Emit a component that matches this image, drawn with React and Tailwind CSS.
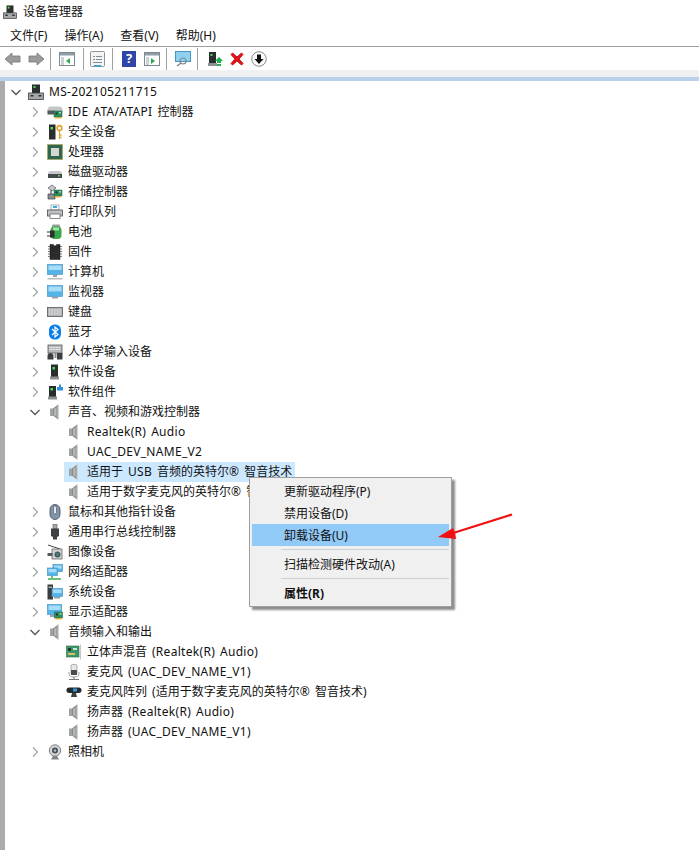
const font = '"Noto Sans", "Noto Sans CJK SC", sans-serif';

// latin runs sit a little wider than the CJK ones in the screenshot
const Label = ({ text }) =>
  text.split(/([\u2E80-\u9FFF\uFF00-\uFFEF]+)/).map((part, i) =>
    i % 2 ? (
      <span key={i}>{part}</span>
    ) : (
      <span key={i} className="tracking-[0.3px] [word-spacing:1.5px]">{part}</span>
    ),
  );

const Card = ({ x = 7, y = 8 }) => (
  <g>
    <rect x={x} y={y} width="8" height="6" fill="#2f8f62" stroke="#1f5e45" strokeWidth="0.5" />
    <rect x={x + 1.5} y={y + 1.5} width="2" height="2" fill="#173c2c" />
    <rect x={x + 5} y={y + 1} width="2" height="1.5" fill="#9fd8b0" />
    <rect x={x + 1} y={y + 6} width="6" height="1.5" fill="#e8b030" />
  </g>
);

const Screen = ({ x = 1, y = 1, w = 14, h = 10 }) => (
  <g>
    <rect x={x} y={y} width={w} height={h} fill="#53b4ea" stroke="#4a94c4" strokeWidth="0.7" />
    <path d={`M${x + 1} ${y + 1}h${w - 2}v${h * 0.45}h${-(w - 2)}z`} fill="#a8dcf7" />
  </g>
);

const icons = {
  root: (
    <g>
      <rect x="4" y="0.500" width="8" height="9" fill="#2b2f2f" />
      <rect x="5.500" y="2" width="2" height="2" fill="#4be04b" />
      <rect x="0.500" y="9" width="15" height="6.500" fill="#a6a9ab" stroke="#3c3f41" strokeWidth="0.8" />
      <rect x="2.500" y="11" width="3" height="1.500" fill="#2b2f2f" />
      <rect x="10.500" y="11" width="3" height="1.500" fill="#2b2f2f" />
    </g>
  ),
  ide: (
    <g>
      <path d="M0.500 6q0-3.500 3.500-3.500h8q3.500 0 3.500 3.500v3H0.500z" fill="#c4c6c8" />
      <rect x="0.500" y="6.500" width="7" height="4" fill="#55595b" />
      <Card x={7} y={7} />
    </g>
  ),
  security: (
    <g>
      <rect x="2" y="0.500" width="6.500" height="15" fill="#2a2d2d" />
      <rect x="3.500" y="3" width="2.500" height="2.500" fill="#4be04b" />
      <circle cx="12.500" cy="4" r="2.400" fill="none" stroke="#e0a830" strokeWidth="1.600" />
      <path d="M12.500 6v9M12.500 11h2M12.500 13.500h2" stroke="#e0a830" strokeWidth="1.300" fill="none" />
    </g>
  ),
  cpu: (
    <g>
      <rect x="0.500" y="0.500" width="15" height="15" fill="#2f6b4e" stroke="#b99a3c" strokeWidth="1" strokeDasharray="1 1" />
      <rect x="1.500" y="1.500" width="13" height="13" fill="#2f6650" />
      <rect x="4" y="4" width="8" height="8" fill="#d6d6d2" />
    </g>
  ),
  disk: (
    <g>
      <path d="M1 10q0-3 3-3h8q3 0 3 3z" fill="#c6c8ca" />
      <rect x="1" y="10" width="14" height="4" fill="#44484a" />
      <rect x="11" y="11" width="2" height="1.500" fill="#4be04b" />
    </g>
  ),
  storage: (
    <g>
      <path d="M1 4l4-3 4 3-4 3z" fill="#c6c8ca" stroke="#55595b" strokeWidth="0.7" />
      <path d="M1 10h7v5H1z" fill="#8c9092" stroke="#3c3f41" strokeWidth="0.7" />
      <path d="M4 6v4" stroke="#3c3f41" strokeWidth="1" />
      <Card x={7} y={6} />
    </g>
  ),
  printer: (
    <g>
      <rect x="4" y="1" width="8" height="5" fill="#fff" stroke="#8a8e90" strokeWidth="0.7" />
      <rect x="6" y="2" width="4" height="2" fill="#3aa8e0" />
      <rect x="0.500" y="6" width="15" height="6" fill="#bfc2c4" stroke="#4a4e50" strokeWidth="0.8" />
      <rect x="3" y="10" width="10" height="4.500" fill="#fff" stroke="#55595b" strokeWidth="0.7" />
    </g>
  ),
  battery: (
    <g>
      <rect x="5" y="0.500" width="8" height="3" rx="1" fill="#9a9ea0" />
      <rect x="3.500" y="2.500" width="11" height="12.500" rx="4" fill="#35a84a" />
      <rect x="6" y="3.500" width="6" height="3" fill="#a5e2a8" />
      <path d="M0 8h4M0 12h4" stroke="#333" strokeWidth="1.200" />
      <path d="M3 6.500h4.500v7H3z" fill="#2c2f2f" />
    </g>
  ),
  firmware: (
    <g>
      <path d="M3 0.500h3.500a1.500 1.500 0 0 0 3 0H13v15H3z" fill="#2b2d2d" stroke="#111" strokeWidth="0.5" />
      <path d="M1 2.500h2M1 5h2M1 7.500h2M1 10h2M1 12.500h2M13 2.500h2M13 5h2M13 7.500h2M13 10h2M13 12.500h2" stroke="#777" strokeWidth="1" />
    </g>
  ),
  computer: (
    <g>
      <Screen x={0.500} y={0.500} w={15} h={10} />
      <rect x="6" y="11" width="4" height="2" fill="#9aa0a4" />
      <rect x="0.500" y="14" width="15" height="1.500" fill="#b8bcbe" />
    </g>
  ),
  monitor: (
    <g>
      <Screen x={0.500} y={1.500} w={15} h={11} />
      <rect x="5" y="13" width="6" height="1.500" fill="#9aa0a4" />
    </g>
  ),
  keyboard: (
    <g>
      <rect x="0.500" y="3.500" width="15" height="9" fill="#b0b3b5" stroke="#55595b" strokeWidth="0.8" />
      <path d="M2 6h12M2 8h12M2 10h12" stroke="#f2f2f2" strokeWidth="1" strokeDasharray="1 0.6" />
    </g>
  ),
  bluetooth: (
    <g>
      <rect x="2" y="0.500" width="12" height="15" rx="5.500" fill="#0a7fe8" />
      <path d="M5 5l6 5.500-3 2.500V3l3 2.500-6 5.500" fill="none" stroke="#fff" strokeWidth="1.200" />
    </g>
  ),
  hid: (
    <g>
      <rect x="1" y="1" width="14" height="8" fill="#b8bbbd" stroke="#55595b" strokeWidth="0.8" />
      <path d="M2.500 3.500h11M2.500 5.500h11" stroke="#f2f2f2" strokeDasharray="1 0.6" />
      <path d="M0.500 15.500v-3.500q0-3 3-3t3 3v3.500z" fill="#3b3f41" />
      <rect x="10" y="9" width="5.500" height="6.500" fill="#3b3f41" />
      <rect x="7.500" y="9" width="2" height="5" fill="#8a8e90" />
    </g>
  ),
  softDevice: (
    <g>
      <rect x="4" y="0.500" width="7" height="12.500" fill="#2a2d2d" />
      <rect x="5.500" y="3" width="2.500" height="2.500" fill="#4be04b" />
      <rect x="3" y="12.500" width="9" height="3" fill="#8d9194" />
    </g>
  ),
  softComp: (
    <g>
      <rect x="2" y="2" width="7" height="11" fill="#2a2d2d" />
      <rect x="3.500" y="4" width="2.500" height="2.500" fill="#4be04b" />
      <rect x="1" y="12.500" width="9" height="3" fill="#8d9194" />
      <path d="M10 3h2V0.500h2V3h2v3.500h-6z" fill="#2f8fdc" />
    </g>
  ),
  speaker: (
    <g>
      <rect x="3" y="4.500" width="3" height="7.500" fill="#a0a3a3" />
      <path d="M6 4.500L11 0.500v15L6 11.500z" fill="#868a88" />
      <rect x="10.500" y="0.500" width="1.500" height="15" fill="#cfd1d0" />
      <path d="M7 5l2.500-2v10L7 11z" fill="#b5b7b6" />
    </g>
  ),
  mouse: (
    <g>
      <rect x="3" y="0.500" width="10" height="15" rx="5" fill="#8094ab" stroke="#3f4a55" strokeWidth="0.8" />
      <rect x="6.500" y="2" width="3" height="8" rx="1.500" fill="#e8eaec" stroke="#3f4a55" strokeWidth="0.6" />
    </g>
  ),
  usb: (
    <g>
      <rect x="6" y="0.500" width="4" height="4" fill="#a8abad" stroke="#55595b" strokeWidth="0.6" />
      <path d="M4 4.500h8V12l-2 1v2.500H6V13l-2-1z" fill="#3f4244" />
    </g>
  ),
  imaging: (
    <g>
      <path d="M1 1l12 4" stroke="#444" strokeWidth="1" />
      <rect x="5" y="5" width="10" height="10" fill="#cfd2d3" stroke="#55595b" strokeWidth="0.7" />
      <circle cx="10.500" cy="10.500" r="2.600" fill="#3f7f7a" stroke="#333" strokeWidth="0.8" />
      <rect x="0.500" y="9" width="5" height="3" fill="#55595b" />
    </g>
  ),
  network: (
    <g>
      <Screen x={6} y={0.500} w={9.500} h={7} />
      <Screen x={0.500} y={4} w={10} h={7.500} />
      <path d="M5 12v2M1 15h13" stroke="#3ab04a" strokeWidth="1.500" />
    </g>
  ),
  system: (
    <g>
      <rect x="0.500" y="0.500" width="5.500" height="15" fill="#3a3d3f" />
      <rect x="1.500" y="2.500" width="3.500" height="1.500" fill="#a9acae" />
      <Screen x={5} y={4.500} w={10.500} h={8} />
      <rect x="7" y="13" width="6" height="1.500" fill="#9aa0a4" />
    </g>
  ),
  display: (
    <g>
      <Screen x={0.500} y={0.500} w={14} h={10} />
      <rect x="3" y="11" width="5" height="2" fill="#9aa0a4" />
      <Card x={7.500} y={8} />
    </g>
  ),
  audioCard: (
    <g>
      <rect x="0.500" y="2" width="12.500" height="11" fill="#3e9668" stroke="#2b6b4a" strokeWidth="0.6" />
      <rect x="2" y="4" width="3" height="3" fill="#1b3a2c" />
      <rect x="7" y="4" width="4" height="2" fill="#cfe6d4" />
      <rect x="2" y="9" width="7" height="2" fill="#d9c06a" />
      <rect x="14" y="0.500" width="1" height="15" fill="#c4c7c8" />
    </g>
  ),
  mic: (
    <g>
      <rect x="5" y="0.500" width="6" height="10" rx="1.500" fill="#e5e6e6" stroke="#8f9394" strokeWidth="0.7" />
      <rect x="5" y="6" width="6" height="5" fill="#4a4d4f" />
      <path d="M3 8v2q0 3 5 3t5-3V8" fill="none" stroke="#9da0a2" />
      <path d="M8 13v2M3 15.500h10" stroke="#777" />
    </g>
  ),
  micArray: (
    <g>
      <rect x="0.500" y="3.500" width="15" height="5.500" rx="2.700" fill="#24292c" />
      <rect x="7" y="4.500" width="4" height="3" fill="#2a9ae0" />
      <path d="M6 9h4l1 4H5z" fill="#3c4042" />
    </g>
  ),
  webcam: (
    <g>
      <circle cx="8" cy="6.500" r="5.700" fill="#d3d5d6" stroke="#6f7375" strokeWidth="0.9" />
      <circle cx="8" cy="6.500" r="3" fill="#4b4f52" />
      <circle cx="8" cy="6.500" r="1.200" fill="#a8c8d8" />
      <path d="M4 15.500h8l-2-3.500H6z" fill="#7f8385" />
    </g>
  ),
};

const Icon = ({ name, className = '' }) => (
  <svg width="16" height="16" viewBox="0 0 16 16" className={`shrink-0 ${className}`}>
    {icons[name]}
  </svg>
);

const Chevron = ({ open }) => (
  <svg width="16" height="16" viewBox="0 0 16 16" className="shrink-0">
    {open ? (
      <path d="M3.500 6l4.500 4.500L12.500 6" fill="none" stroke="#555" strokeWidth="1.300" />
    ) : (
      <path d="M6 3.500L10.500 8 6 12.500" fill="none" stroke="#a6a6a6" strokeWidth="1.300" />
    )}
  </svg>
);

const tree = [
  { level: 0, icon: 'root', label: 'MS-202105211715', open: true },
  { level: 1, icon: 'ide', label: 'IDE ATA/ATAPI 控制器' },
  { level: 1, icon: 'security', label: '安全设备' },
  { level: 1, icon: 'cpu', label: '处理器' },
  { level: 1, icon: 'disk', label: '磁盘驱动器' },
  { level: 1, icon: 'storage', label: '存储控制器' },
  { level: 1, icon: 'printer', label: '打印队列' },
  { level: 1, icon: 'battery', label: '电池' },
  { level: 1, icon: 'firmware', label: '固件' },
  { level: 1, icon: 'computer', label: '计算机' },
  { level: 1, icon: 'monitor', label: '监视器' },
  { level: 1, icon: 'keyboard', label: '键盘' },
  { level: 1, icon: 'bluetooth', label: '蓝牙' },
  { level: 1, icon: 'hid', label: '人体学输入设备' },
  { level: 1, icon: 'softDevice', label: '软件设备' },
  { level: 1, icon: 'softComp', label: '软件组件' },
  { level: 1, icon: 'speaker', label: '声音、视频和游戏控制器', open: true },
  { level: 2, icon: 'speaker', label: 'Realtek(R) Audio' },
  { level: 2, icon: 'speaker', label: 'UAC_DEV_NAME_V2' },
  { level: 2, icon: 'speaker', label: '适用于 USB 音频的英特尔® 智音技术', selected: true },
  { level: 2, icon: 'speaker', label: '适用于数字麦克风的英特尔® 智音技术' },
  { level: 1, icon: 'mouse', label: '鼠标和其他指针设备' },
  { level: 1, icon: 'usb', label: '通用串行总线控制器' },
  { level: 1, icon: 'imaging', label: '图像设备' },
  { level: 1, icon: 'network', label: '网络适配器' },
  { level: 1, icon: 'system', label: '系统设备' },
  { level: 1, icon: 'display', label: '显示适配器' },
  { level: 1, icon: 'speaker', label: '音频输入和输出', open: true },
  { level: 2, icon: 'audioCard', label: '立体声混音 (Realtek(R) Audio)' },
  { level: 2, icon: 'mic', label: '麦克风 (UAC_DEV_NAME_V1)' },
  { level: 2, icon: 'micArray', label: '麦克风阵列 (适用于数字麦克风的英特尔® 智音技术)' },
  { level: 2, icon: 'speaker', label: '扬声器 (Realtek(R) Audio)' },
  { level: 2, icon: 'speaker', label: '扬声器 (UAC_DEV_NAME_V1)' },
  { level: 1, icon: 'webcam', label: '照相机' },
];

function TreeRow({ row }) {
  if (row.level === 2) {
    return (
      <div className="flex h-5 items-center pl-[59px]">
        <div className={`flex h-5 items-center pl-[2px] pr-[3px] ${row.selected ? 'bg-[#cce8ff]' : ''}`}>
          <Icon name={row.icon} />
          <span className="ml-[5px] whitespace-pre"><Label text={row.label} /></span>
        </div>
      </div>
    );
  }
  return (
    <div className={`flex h-5 items-center ${row.level === 0 ? 'pl-[3px]' : 'pl-[22px]'}`}>
      <Chevron open={row.open} />
      <Icon name={row.icon} className="ml-1" />
      <span className="ml-[5px] whitespace-pre"><Label text={row.label} /></span>
    </div>
  );
}

const Sep = ({ className = '' }) => <div className={`h-[22px] w-px bg-[#a0a0a0] ${className}`} />;

const Arrow = ({ flip }) => (
  <svg width="16" height="14" viewBox="0 0 16 14" className="shrink-0">
    <path
      d={flip ? 'M16 7L9 1v3H1v6h8v3z' : 'M0 7l7-6v3h8v6H7v3z'}
      fill="#9b9b9b"
      stroke="#777"
      strokeWidth="0.8"
    />
  </svg>
);

const Pane = ({ flip }) => (
  <svg width="16" height="14" viewBox="0 0 16 14" className="shrink-0">
    <rect x="0.500" y="0.500" width="15" height="13" fill="#fff" stroke="#7d8a90" />
    <rect x="1" y="1" width="14" height="2.500" fill="#8f9ea6" />
    <rect x="2" y="5" width="3" height="8" fill="#c8d3d8" />
    <path d={flip ? 'M7 6l4 3-4 3z' : 'M11 6L7 9l4 3z'} fill="#2eaa4e" />
  </svg>
);

function Toolbar() {
  return (
    <div className="flex h-6 items-center border-t border-[#a0a0a0] bg-white pl-[5px]">
      <Arrow />
      <div className="ml-[7px]"><Arrow flip /></div>
      <Sep className="ml-[6px]" />
      <div className="ml-[8px]"><Pane /></div>
      <Sep className="ml-[8px]" />
      <svg width="15" height="16" viewBox="0 0 15 16" className="ml-[6px] shrink-0">
        <rect x="0.500" y="0.500" width="14" height="15" rx="1" fill="#f4f4f4" stroke="#8d9598" />
        <path d="M3 5h2v1H3zm0 3h2v1H3zM6 5h6v1H6zm0 3h6v1H6zm-3 3h9v1H3z" fill="#7f8b90" />
        <rect x="4" y="14" width="7" height="1.500" fill="#3aa0e0" />
      </svg>
      <Sep className="ml-[7px]" />
      <div className="ml-[9px] flex h-4 w-[14px] items-center justify-center bg-[#2f46a8] text-[13px] leading-none font-bold text-white">?</div>
      <div className="ml-2"><Pane flip /></div>
      <Sep className="ml-[6px]" />
      <svg width="16" height="16" viewBox="0 0 16 16" className="ml-2 shrink-0">
        <rect x="0.500" y="0.500" width="15" height="10" fill="#8fd0f0" stroke="#4a94c4" />
        <circle cx="8" cy="10" r="3" fill="none" stroke="#7d8a90" strokeWidth="1.200" />
        <path d="M6 12l-4 3" stroke="#7d8a90" strokeWidth="1.500" />
      </svg>
      <Sep className="ml-[6px]" />
      <svg width="16" height="16" viewBox="0 0 16 16" className="ml-[10px] shrink-0">
        <rect x="1" y="1" width="7" height="11" fill="#2a2d2d" />
        <rect x="2.500" y="3" width="2" height="2" fill="#4be04b" />
        <rect x="0" y="12" width="9" height="3" fill="#8d9194" />
        <path d="M11 6l4 4h-2v2h-4v-2H7zM9 13h4v2H9z" fill="#21b34b" />
      </svg>
      <svg width="14" height="14" viewBox="0 0 14 14" className="ml-[6px] shrink-0">
        <path d="M1 2.500L2.500 1 7 5l4.500-4L13 2.500 9 7l4 4.500-1.500 1.500L7 9l-4.500 4L1 11.500 5 7z" fill="#e0141e" stroke="#d01018" />
      </svg>
      <svg width="16" height="16" viewBox="0 0 16 16" className="ml-[7px] shrink-0">
        <circle cx="8" cy="8" r="7.300" fill="#fafafa" stroke="#8a8a8a" />
        <path d="M6 3.500h4V8h2.500L8 13 3.500 8H6z" fill="#111" />
      </svg>
    </div>
  );
}

function MenuItem({ label, active, bold }) {
  return (
    <div className={`flex h-[22px] items-center pt-px pl-[32px] ${active ? 'bg-[#91c9f7]' : ''} ${bold ? 'font-bold' : ''}`}>
      {label}
    </div>
  );
}

function ContextMenu() {
  return (
    <div className="absolute top-[477px] left-[249px] w-[203px] border border-[#a0a0a0] bg-[#f0f0f0] p-[2px] text-[12px] text-[#111] shadow-[3px_3px_2px_rgba(0,0,0,0.45)]">
      <MenuItem label="更新驱动程序(P)" />
      <MenuItem label="禁用设备(D)" />
      <MenuItem label="卸载设备(U)" active />
      <div className="my-[3px] ml-[29px] h-px bg-[#d0d0d0]" />
      <MenuItem label="扫描检测硬件改动(A)" />
      <div className="my-[3px] ml-[29px] h-px bg-[#d0d0d0]" />
      <MenuItem label="属性(R)" bold />
    </div>
  );
}

export default function App() {
  return (
    <div className="relative h-[850px] w-[699px] overflow-hidden bg-white text-[12px] text-[#111]" style={{ fontFamily: font }}>
      <div className="flex h-6 items-center pl-[3px]">
        <Icon name="root" className="h-[14px] w-[14px]" />
        <span className="ml-[6px]">设备管理器</span>
      </div>
      <div className="flex h-[22px] items-center gap-[17px] pt-px pl-[10px]">
        <span>文件(F)</span>
        <span>操作(A)</span>
        <span>查看(V)</span>
        <span>帮助(H)</span>
      </div>
      <Toolbar />
      <div className="h-[7px] bg-[#f0f0f0]" />
      <div className="h-1 bg-[#b9d1ea]" />
      <div className="flex">
        <div className="h-[770px] w-[5px] shrink-0 bg-[#ababab]" />
        <div className="flex-1 pt-px">
          {tree.map((row) => (
            <TreeRow key={row.label + row.level} row={row} />
          ))}
        </div>
      </div>
      <ContextMenu />
      <svg width="80" height="30" viewBox="0 0 80 30" className="absolute top-[512px] left-[436px]">
        <path d="M76 2.500L14 22" stroke="#f01010" strokeWidth="2.200" fill="none" />
        <path d="M2 25l15-9 2 5 1 6z" fill="#f01010" />
      </svg>
    </div>
  );
}
